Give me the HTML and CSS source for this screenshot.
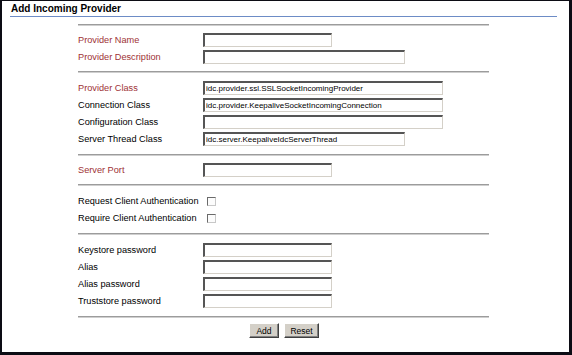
FILE: index.html
```html
<!DOCTYPE html>
<html>
<head>
<meta charset="utf-8">
<title>Add Incoming Provider</title>
<link rel="stylesheet" href="styles.css">
</head>
<body>
<div class="frame">
  <div class="title">Add Incoming Provider</div>
  <form class="form">
    <div class="sep"></div>
    <div class="section s7">
      <label class="lbl req">Provider Name</label><input class="txt short" type="text">
      <label class="lbl req">Provider Description</label><input class="txt medium" type="text">
    </div>
    <div class="sep"></div>
    <div class="section s8">
      <label class="lbl req">Provider Class</label><input class="txt long" type="text" value="idc.provider.ssl.SSLSocketIncomingProvider">
      <label class="lbl">Connection Class</label><input class="txt long" type="text" value="idc.provider.KeepaliveSocketIncomingConnection">
      <label class="lbl">Configuration Class</label><input class="txt long" type="text">
      <label class="lbl">Server Thread Class</label><input class="txt medium" type="text" value="idc.server.KeepaliveIdcServerThread">
    </div>
    <div class="sep"></div>
    <div class="section s7">
      <label class="lbl req">Server Port</label><input class="txt short" type="text">
    </div>
    <div class="sep"></div>
    <div class="section s8">
      <label class="lbl">Request Client Authentication</label><input class="chk" type="checkbox">
      <label class="lbl">Require Client Authentication</label><input class="chk" type="checkbox">
    </div>
    <div class="sep"></div>
    <div class="section s8">
      <label class="lbl">Keystore password</label><input class="txt short" type="password">
      <label class="lbl">Alias</label><input class="txt short" type="text">
      <label class="lbl">Alias password</label><input class="txt short" type="password">
      <label class="lbl">Truststore password</label><input class="txt short" type="password">
    </div>
    <div class="sep"></div>
    <div class="buttons">
      <button class="btn add" type="button">Add</button>
      <button class="btn reset" type="reset">Reset</button>
    </div>
  </form>
</div>
</body>
</html>
```

FILE: styles.css
```css
html, body {
  margin: 0;
  padding: 0;
  background: #ffffff;
}

.frame {
  box-sizing: border-box;
  width: 572px;
  height: 355px;
  background: #ffffff;
  border-style: solid;
  border-color: #0c0c14;
  border-width: 1px 3px 3px 2px;
  font-family: "Liberation Sans", Arial, sans-serif;
  color: #000000;
  overflow: hidden;
}

.title {
  margin: 0 12px 0 8px;
  padding: 1px 0 0 1px;
  height: 14px;
  line-height: 14px;
  font-size: 10px;
  font-weight: bold;
  border-bottom: 1px solid #6d8cc6;
}

.form {
  margin: 7px 0 0 76px;
  width: 411px;
}

.sep {
  height: 0;
  border-top: 1px solid #9c9c9c;
  border-bottom: 1px solid #cfcfcf;
}

.section {
  display: grid;
  grid-template-columns: 125px auto;
  grid-auto-rows: 14px;
  row-gap: 3px;
  align-items: center;
  justify-items: start;
}

.s7 { padding: 7px 0; }
.s8 { padding: 8px 0; }

.lbl {
  font-size: 9.2px;
  line-height: 14px;
  white-space: nowrap;
  color: #000000;
}

.lbl.req {
  color: #9e3236;
}

.txt {
  box-sizing: border-box;
  height: 14px;
  margin: 0;
  padding: 0 1px;
  background: #ffffff;
  border-style: solid;
  border-width: 2px 1px 1px 2px;
  border-color: #555555 #d4d0c8 #d4d0c8 #555555;
  border-radius: 0;
  outline: none;
  font-family: "Liberation Sans", Arial, sans-serif;
  font-size: 8px;
  line-height: 10px;
  color: #000000;
}

.short { width: 129px; }
.medium { width: 202px; }
.long { width: 240px; }

.chk {
  -webkit-appearance: none;
  appearance: none;
  box-sizing: border-box;
  width: 9px;
  height: 9px;
  margin: 0 0 0 4px;
  padding: 0;
  background: #fcfcfc;
  border-style: solid;
  border-width: 1px;
  border-color: #6a6a6a #c8c8c8 #c8c8c8 #6a6a6a;
  border-radius: 0;
}

.buttons {
  display: flex;
  justify-content: center;
  gap: 5px;
  margin-top: 5px;
  padding-left: 1px;
}

.btn {
  box-sizing: border-box;
  height: 15px;
  margin: 0;
  padding: 0;
  background: #d4d0c8;
  border-style: solid;
  border-width: 1px;
  border-color: #ffffff #404040 #404040 #ffffff;
  box-shadow: inset -1px -1px 0 #808080;
  border-radius: 0;
  font-family: "Liberation Sans", Arial, sans-serif;
  font-size: 8.5px;
  line-height: 12px;
  color: #000000;
}

.add { width: 30px; }
.reset { width: 35px; }
```
